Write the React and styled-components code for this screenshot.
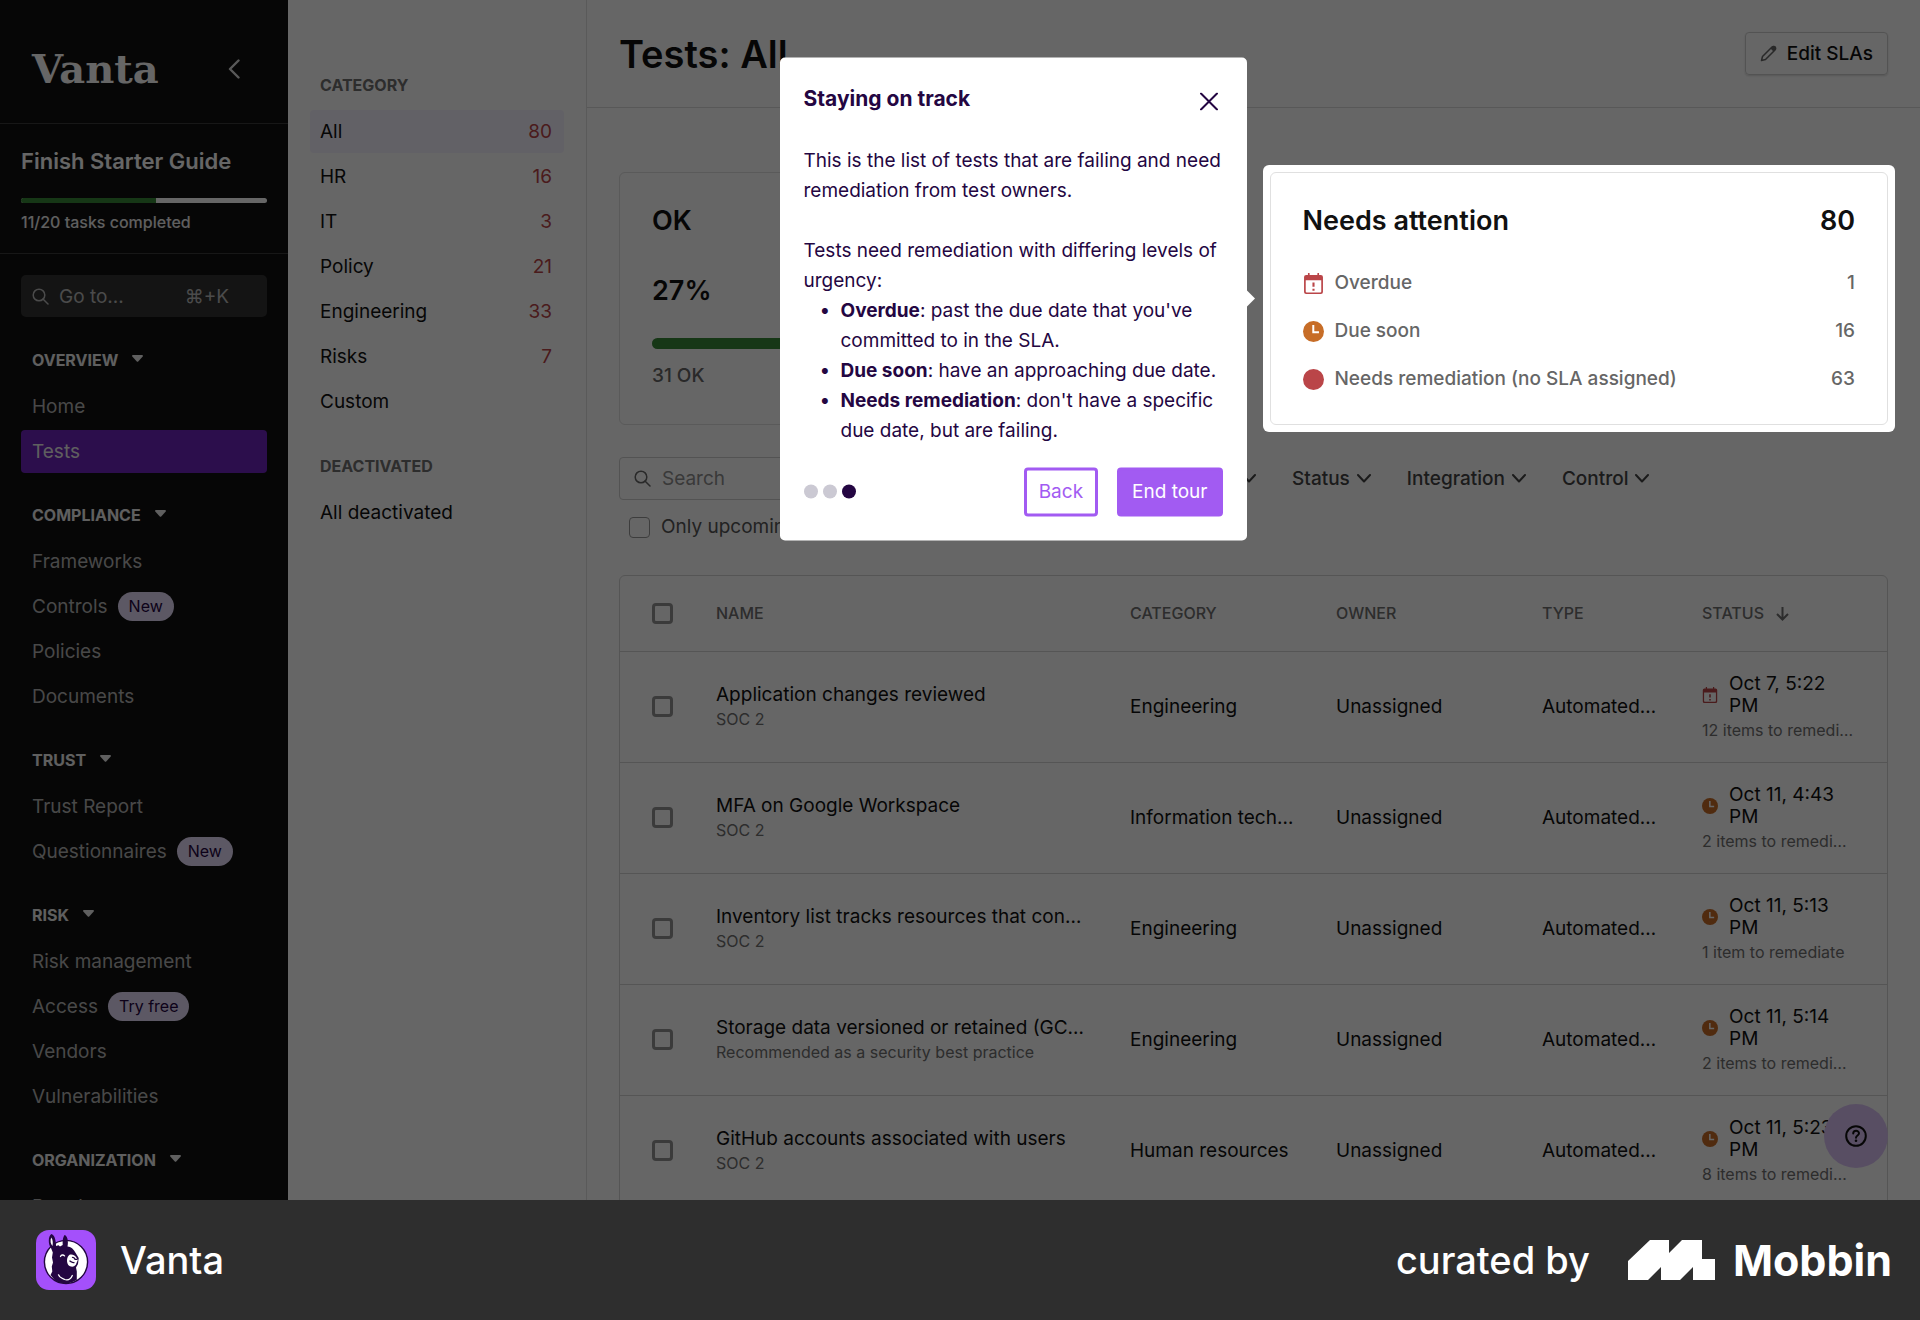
import styled, { createGlobalStyle } from "styled-components";

const navGroups = [
  { title: "Overview", items: [{ name: "Home" }, { name: "Tests", active: true }] },
  {
    title: "Compliance",
    items: [
      { name: "Frameworks" },
      { name: "Controls", tag: "New" },
      { name: "Policies" },
      { name: "Documents" },
    ],
  },
  {
    title: "Trust",
    items: [{ name: "Trust Report" }, { name: "Questionnaires", tag: "New" }],
  },
  {
    title: "Risk",
    items: [
      { name: "Risk management" },
      { name: "Access", tag: "Try free" },
      { name: "Vendors" },
      { name: "Vulnerabilities" },
    ],
  },
  { title: "Organization", items: [{ name: "People" }] },
];

const categories = [
  { name: "All", count: 80, active: true },
  { name: "HR", count: 16 },
  { name: "IT", count: 3 },
  { name: "Policy", count: 21 },
  { name: "Engineering", count: 33 },
  { name: "Risks", count: 7 },
  { name: "Custom" },
];

const attention = [
  { name: "Overdue", count: 1, icon: "overdue" },
  { name: "Due soon", count: 16, icon: "soon" },
  { name: "Needs remediation (no SLA assigned)", count: 63, icon: "none" },
];

const tests = [
  {
    name: "Application changes reviewed",
    note: "SOC 2",
    category: "Engineering",
    icon: "overdue",
    date: "Oct 7, 5:22 PM",
    left: "12 items to remedi…",
  },
  {
    name: "MFA on Google Workspace",
    note: "SOC 2",
    category: "Information tech…",
    icon: "soon",
    date: "Oct 11, 4:43 PM",
    left: "2 items to remedi…",
  },
  {
    name: "Inventory list tracks resources that con…",
    note: "SOC 2",
    category: "Engineering",
    icon: "soon",
    date: "Oct 11, 5:13 PM",
    left: "1 item to remediate",
  },
  {
    name: "Storage data versioned or retained (GC…",
    note: "Recommended as a security best practice",
    category: "Engineering",
    icon: "soon",
    date: "Oct 11, 5:14 PM",
    left: "2 items to remedi…",
  },
  {
    name: "GitHub accounts associated with users",
    note: "SOC 2",
    category: "Human resources",
    icon: "soon",
    date: "Oct 11, 5:23 PM",
    left: "8 items to remedi…",
  },
];

const StatusIcon = ({ kind, size }) => (
  <svg width={size} height={size} viewBox="0 0 20 20" aria-hidden="true">
    {kind === "overdue" && (
      <>
        <path
          d="M5.5 .5v3M14.5 .5v3"
          stroke="#ba4548"
          strokeWidth="1.6"
          strokeLinecap="round"
        />
        <path
          fill="#ba4548"
          fillRule="evenodd"
          d="M3 1.8h14a2 2 0 0 1 2 2V18a2 2 0 0 1-2 2H3a2 2 0 0 1-2-2V3.8a2 2 0 0 1 2-2zM2.6 7v10.5a1 1 0 0 0 1 1h12.8a1 1 0 0 0 1-1V7z"
        />
        <path d="M10 9v4M10 15v2" stroke="#ba4548" strokeWidth="2" />
      </>
    )}
    {kind === "soon" && (
      <>
        <circle cx="10" cy="10" r="10" fill="#c76d27" />
        <path d="M9.8 3.8v6.8h5.4" stroke="#fff" strokeWidth="1.9" fill="none" />
      </>
    )}
    {kind === "none" && <circle cx="10" cy="10" r="10" fill="#ba4548" />}
  </svg>
);

const SearchIcon = () => (
  <svg width="17" height="17" viewBox="0 0 17 17" aria-hidden="true">
    <circle cx="7" cy="7" r="5.8" fill="none" stroke="currentColor" strokeWidth="1.5" />
    <path d="M11 11l5 5" stroke="currentColor" strokeWidth="1.5" strokeLinecap="round" />
  </svg>
);

const Chevron = () => (
  <svg width="14" height="9" viewBox="0 0 14 9" aria-hidden="true">
    <path
      d="M1 1l6 6.5L13 1"
      fill="none"
      stroke="currentColor"
      strokeWidth="2"
      strokeLinecap="round"
      strokeLinejoin="round"
    />
  </svg>
);

const Donkey = () => (
  <svg width="60" height="60" viewBox="0 0 60 60" aria-hidden="true">
    <rect width="60" height="60" rx="13" fill="#a450fb" />
    <circle cx="30" cy="32" r="21.6" fill="#fff" stroke="#240642" strokeWidth="1.4" />
    {/* head, ears and neck */}
    <path
      fill="#240642"
      d="M15.3 4c3 .6 4.400 5 4.800 12l2.400-.8 1.500 1.300 2.700-1.500c-.2-3.500 0-7.500 1.800-10 2.500.6 4.200 5 3 11.500 3.500.4 6 2.500 8 6.200l3.200 5.300-.7 6-2 3.500.8 4V49.800C34 54.500 26 54.500 19 50.500L14.500 45l1.800-3.500-.5-5 1.200-4-1-5 .8-5-1.800-4.500C12 14 12 6.500 15.300 4z"
    />
    {/* left ear highlight */}
    <path fill="#fff" d="M15.200 7.500c1.800 2 1.800 5.500 1.300 8.500-2-2-2.500-5.500-1.300-8.500z" />
    {/* muzzle */}
    <path fill="#fff" d="M33.500 24.800c3-.6 5 .3 6.500 2.200l1.800 3-2 4.800c-2 2.600-5.600 2.200-7.500.2-2.200-3.200-1.500-8 1.200-10.200z" />
    <path
      d="M36 27.500c1.500-.6 2.500.5 3 1.800h2.500M33.500 31c1.500 0 2.500 2.500 5 1.500"
      fill="none"
      stroke="#240642"
      strokeWidth="1.300"
    />
    {/* eye and smile */}
    <path
      d="M24.500 26.500c.8-1.800 2.800-2 4-.6M22.500 44.800c1.500 4.200 4.500 2.800 6 4.700 2.500.8 6 .3 7.800-4"
      fill="none"
      stroke="#fff"
      strokeWidth="1.300"
      strokeLinecap="round"
    />
  </svg>
);

export default function App() {
  return (
    <Page>
      <GlobalStyle />
      <Screen>
        <Sidebar>
          <Brand>
            <Logo href="#home">Vanta</Logo>
            <Collapse aria-label="Collapse sidebar">
              <svg width="12" height="20" viewBox="0 0 12 20">
                <path
                  d="M10.5 1.5L2 10l8.5 8.5"
                  fill="none"
                  stroke="currentColor"
                  strokeWidth="2.4"
                  strokeLinecap="round"
                  strokeLinejoin="round"
                />
              </svg>
            </Collapse>
          </Brand>
          <Guide>
            <h2>Finish Starter Guide</h2>
            <div className="track">
              <div className="done" />
            </div>
            <p>11/20 tasks completed</p>
          </Guide>
          <GoTo>
            <SearchIcon />
            <input type="text" placeholder="Go to..." aria-label="Go to" />
            <span>⌘+K</span>
          </GoTo>
          <Nav>
            {navGroups.map((group) => (
              <NavGroup key={group.title}>
                <button>
                  {group.title}
                  <svg width="11" height="7" viewBox="0 0 11 7">
                    <path
                      d="M1 0h9a1 1 0 0 1 .7 1.5L6.200 6.500a1 1 0 0 1-1.400 0L.3 1.500A1 1 0 0 1 1 0z"
                      fill="currentColor"
                    />
                  </svg>
                </button>
                <ul>
                  {group.items.map((item) => (
                    <li key={item.name}>
                      <NavLink href="#nav" $active={item.active}>
                        {item.name}
                        {item.tag && <Tag>{item.tag}</Tag>}
                      </NavLink>
                    </li>
                  ))}
                </ul>
              </NavGroup>
            ))}
          </Nav>
        </Sidebar>
        <CategoryPanel>
          <h3>Category</h3>
          <ul>
            {categories.map((item) => (
              <li key={item.name}>
                <CategoryLink href="#category" $active={item.active}>
                  {item.name}
                  <span>{item.count}</span>
                </CategoryLink>
              </li>
            ))}
          </ul>
          <h3>Deactivated</h3>
          <ul>
            <li>
              <CategoryLink href="#category">All deactivated</CategoryLink>
            </li>
          </ul>
        </CategoryPanel>
        <Main>
          <Header>
            <h1>Tests: All</h1>
            <EditButton>
              <svg width="17" height="17" viewBox="0 0 17 17" aria-hidden="true">
                <path
                  d="M1.5 15.5l1-4L12 2a1.9 1.9 0 0 1 3 3l-9.5 9.5z"
                  fill="none"
                  stroke="currentColor"
                  strokeWidth="1.5"
                  strokeLinejoin="round"
                />
                <path d="M10.5 3.5L12.5 1.5a2 2 0 0 1 3 3l-2 2z" fill="currentColor" />
              </svg>
              Edit SLAs
            </EditButton>
          </Header>
          <Content>
            <Cards>
              <Card>
                <h2>OK</h2>
                <strong>27%</strong>
                <div className="track">
                  <div className="done" />
                </div>
                <p>31 OK</p>
              </Card>
              <Spotlight>
                <Card>
                  <h2>
                    Needs attention <span>80</span>
                  </h2>
                  <AttentionList>
                    {attention.map((item) => (
                      <li key={item.name}>
                        <StatusIcon kind={item.icon} size={21} />
                        {item.name}
                        <span>{item.count}</span>
                      </li>
                    ))}
                  </AttentionList>
                </Card>
                <Tour />
              </Spotlight>
            </Cards>
            <Filters>
              <SearchBox>
                <SearchIcon />
                <input type="search" placeholder="Search" aria-label="Search" />
              </SearchBox>
              {["Type", "Status", "Integration", "Control"].map((name) => (
                <FilterButton key={name}>
                  {name}
                  <Chevron />
                </FilterButton>
              ))}
            </Filters>
            <Upcoming>
              <input type="checkbox" />
              Only upcoming
            </Upcoming>
            <TestTable />
          </Content>
        </Main>
        <Help aria-label="Help">
          <svg width="22" height="22" viewBox="0 0 22 22">
            <circle cx="11" cy="11" r="9.8" fill="none" stroke="currentColor" strokeWidth="2" />
            <path
              d="M8.2 8.6c0-3.8 5.8-3.6 5.8-.3 0 2.2-3 2.2-3 4.4"
              fill="none"
              stroke="currentColor"
              strokeWidth="2"
              strokeLinecap="round"
            />
            <circle cx="11" cy="15.8" r="1.3" fill="currentColor" />
          </svg>
        </Help>
        <Overlay />
      </Screen>
      <Footer>
        <Donkey />
        <FooterText>Vanta</FooterText>
        <Curated>
          <FooterText>curated by</FooterText>
          <svg width="87" height="40" viewBox="0 0 87 40" aria-hidden="true">
            <path
              fill="#fff"
              d="M0 21L22 0h19v13L54 0h20v19h13v21H65V27L52 40H33V27L20 40H0z"
            />
          </svg>
          <Mobbin>Mobbin</Mobbin>
        </Curated>
      </Footer>
    </Page>
  );
}

function Tour() {
  return (
    <TourBox role="dialog" aria-label="Staying on track">
      <header>
        <h2>Staying on track</h2>
        <button aria-label="Close">
          <svg width="18" height="18" viewBox="0 0 18 18">
            <path
              d="M1 1l16 16M17 1L1 17"
              stroke="currentColor"
              strokeWidth="2"
              strokeLinecap="round"
            />
          </svg>
        </button>
      </header>
      <p>
        This is the list of tests that are failing and need remediation from
        test owners.
      </p>
      <p>Tests need remediation with differing levels of urgency:</p>
      <ul>
        <li>
          <b>Overdue</b>: past the due date that you've committed to in the SLA.
        </li>
        <li>
          <b>Due soon</b>: have an approaching due date.
        </li>
        <li>
          <b>Needs remediation</b>: don't have a specific due date, but are
          failing.
        </li>
      </ul>
      <footer>
        <Dot />
        <Dot />
        <Dot $current />
        <TourButton>Back</TourButton>
        <TourButton $primary>End tour</TourButton>
      </footer>
    </TourBox>
  );
}

function TestTable() {
  return (
    <TableBox>
      <Table>
        <colgroup>
          <col className="check" />
          <col />
          <col className="wide" />
          <col className="wide" />
          <col className="type" />
          <col className="status" />
        </colgroup>
        <thead>
          <tr>
            <th>
              <input type="checkbox" aria-label="Select all tests" />
            </th>
            <th>Name</th>
            <th>Category</th>
            <th>Owner</th>
            <th>Type</th>
            <th>
              Status
              <svg width="13" height="15" viewBox="0 0 13 15" aria-hidden="true">
                <path
                  d="M6.5 1v12.5M1 8l5.5 5.5L12 8"
                  fill="none"
                  stroke="currentColor"
                  strokeWidth="2"
                />
              </svg>
            </th>
          </tr>
        </thead>
        <tbody>
          {tests.map((test) => (
            <tr key={test.name}>
              <td>
                <input type="checkbox" aria-label={"Select " + test.name} />
              </td>
              <td>
                {test.name}
                <small>{test.note}</small>
              </td>
              <td>{test.category}</td>
              <td>Unassigned</td>
              <td>Automated…</td>
              <td>
                <DueDate>
                  <StatusIcon kind={test.icon} size={16} />
                  <span>{test.date}</span>
                </DueDate>
                <small>{test.left}</small>
              </td>
            </tr>
          ))}
        </tbody>
      </Table>
    </TableBox>
  );
}

const GlobalStyle = createGlobalStyle`
  * {
    box-sizing: border-box;
  }
  body {
    margin: 0;
    font-family: Inter, "Liberation Sans", sans-serif;
    font-size: 19px;
    color: #111;
  }
  h1, h2, h3, p, ul {
    margin: 0;
    padding: 0;
  }
  ul {
    list-style: none;
  }
  a {
    color: inherit;
    text-decoration: none;
  }
  button, input {
    font: inherit;
    color: inherit;
    background: none;
    border: none;
    padding: 0;
    margin: 0;
  }
  button {
    cursor: pointer;
  }
  svg {
    flex-shrink: 0;
  }
  input[type="checkbox"] {
    appearance: none;
    display: block;
    width: 21px;
    height: 21px;
    border: 3px solid #949494;
    border-radius: 4px;
  }
`;

const Page = styled.div`
  display: flex;
  flex-direction: column;
  height: 100vh;
`;

const Screen = styled.div`
  position: relative;
  display: flex;
  flex: 1;
  min-height: 0;
  overflow: hidden;
  background: #fff;
`;

const Overlay = styled.div`
  position: absolute;
  inset: 0;
  z-index: 1;
  background: rgba(0, 0, 0, 0.6);
`;

const Sidebar = styled.aside`
  flex: 0 0 288px;
  min-width: 0;
  background: #111;
  color: #fff;
`;

const Brand = styled.div`
  display: flex;
  align-items: center;
  justify-content: space-between;
  height: 124px;
  padding: 14px 48px 0 32px;
  border-bottom: 1px solid #3a3a3a;
`;

const Logo = styled.a`
  font: bold 40px/50px "DejaVu Serif", serif;
`;

const Collapse = styled.button`
  display: flex;
  color: #ddd;
`;

const Guide = styled.section`
  padding: 24px 21px 0;
  height: 130px;
  border-bottom: 1px solid #3a3a3a;

  h2 {
    font-size: 22px;
    line-height: 26px;
    font-weight: 600;
  }
  .track {
    height: 5px;
    margin: 24px 0 10px;
    border-radius: 3px;
    background: #fff;
    overflow: hidden;
  }
  .done {
    width: 55%;
    height: 100%;
    background: #388a37;
  }
  p {
    font-size: 16px;
    line-height: 18px;
    font-weight: 500;
    color: #eee;
  }
`;

const GoTo = styled.div`
  display: flex;
  align-items: center;
  height: 42px;
  margin: 21px 21px 0;
  padding: 0 38px 0 11px;
  border-radius: 5px;
  background: #333;
  color: #bbb;

  input {
    flex: 1;
    width: 100%;
    min-width: 0;
    margin-left: 10px;
  }
  input::placeholder {
    color: #bbb;
    opacity: 1;
  }
`;

const Nav = styled.nav`
  display: flex;
  flex-direction: column;
  gap: 29px;
  padding: 30px 21px 0;
`;

const NavGroup = styled.div`
  button {
    display: flex;
    align-items: center;
    gap: 14px;
    height: 25px;
    margin-bottom: 13px;
    padding-left: 11px;
    font-size: 16px;
    font-weight: 700;
    text-transform: uppercase;
    color: #eee;
  }
  button svg {
    margin-bottom: 3px;
  }
  ul {
    display: grid;
    gap: 2px;
  }
`;

const NavLink = styled.a`
  display: flex;
  align-items: center;
  gap: 10px;
  height: 43px;
  padding: 0 11px;
  border-radius: 4px;
  background: ${(props) => (props.$active ? "#6f23bf" : "none")};
  color: ${(props) => (props.$active ? "#eee" : "#b5b5b5")};
`;

const Tag = styled.span`
  padding: 0 11px;
  border-radius: 15px;
  font-size: 16px;
  line-height: 29px;
  background: #e7dcfa;
  color: #240642;
`;

const CategoryPanel = styled.aside`
  flex: 0 0 299px;
  padding: 73px 22px 0;
  border-right: 1px solid #e0e0e0;

  h3 {
    padding: 0 10px;
    font-size: 16px;
    line-height: 24px;
    font-weight: 700;
    text-transform: uppercase;
    color: #707070;
  }
  ul {
    display: grid;
    gap: 2px;
    padding: 13px 0 31px;
  }
`;

const CategoryLink = styled.a`
  display: flex;
  align-items: center;
  justify-content: space-between;
  height: 43px;
  padding: 0 12px 0 10px;
  border-radius: 4px;
  background: ${(props) => (props.$active ? "#f6f2ff" : "none")};

  span {
    color: #ba4548;
  }
`;

const Main = styled.main`
  flex: 1;
  min-width: 0;
`;

const Header = styled.header`
  display: flex;
  align-items: center;
  justify-content: space-between;
  height: 108px;
  padding: 0 32px;
  border-bottom: 1px solid #dcdcdc;

  h1 {
    font-size: 38px;
    font-weight: 600;
  }
`;

const EditButton = styled.button`
  display: flex;
  align-items: center;
  gap: 10px;
  height: 43px;
  padding: 0 14px;
  border: 1px solid #d0d0d0;
  border-radius: 4px;
  box-shadow: 0 1px 2px rgba(0, 0, 0, 0.15);
  font-weight: 500;

  svg {
    color: #666;
  }
`;

const Content = styled.div`
  padding: 64px 32px 0;
`;

const Cards = styled.div`
  display: grid;
  grid-template-columns: 1fr 1fr;
  gap: 32px;
`;

const Card = styled.section`
  height: 253px;
  padding: 31px 32px 0;
  border: 1px solid #e0e0e0;
  border-radius: 6px;

  h2,
  strong {
    display: flex;
    justify-content: space-between;
    font-size: 27px;
    line-height: 34px;
    font-weight: 600;
  }
  strong {
    margin: 36px 0 30px;
  }
  .track {
    height: 11px;
    border-radius: 6px;
    background: #e0e0e0;
    overflow: hidden;
  }
  .done {
    width: 27%;
    height: 100%;
    background: #388a37;
  }
  p {
    margin-top: 15px;
    line-height: 24px;
    font-weight: 500;
    color: #666;
  }
`;

const Spotlight = styled.div`
  position: relative;
  z-index: 2;
  margin: -7px;
  padding: 7px;
  border-radius: 6px;
  background: #fff;
`;

const AttentionList = styled.ul`
  display: grid;
  gap: 24px;
  margin-top: 33px;

  li {
    display: flex;
    align-items: center;
    gap: 11px;
    line-height: 24px;
    font-weight: 500;
    color: #666;
  }
  span {
    margin-left: auto;
  }
`;

const TourBox = styled.div`
  position: absolute;
  top: 50%;
  right: calc(100% + 16px);
  width: 467px;
  padding: 24px;
  transform: translateY(-50%);
  border-radius: 5px;
  background: #fff;
  color: #240642;
  line-height: 30px;

  &::after {
    content: "";
    position: absolute;
    top: 50%;
    left: 100%;
    margin-top: -8px;
    border: 8px solid transparent;
    border-left-color: #fff;
    border-right: none;
  }
  header {
    display: flex;
    justify-content: space-between;
    margin-bottom: 24px;
  }
  h2 {
    font-size: 21px;
    line-height: 34px;
    font-weight: 700;
  }
  header button {
    display: flex;
    align-items: center;
    height: 40px;
    margin-right: 5px;
  }
  p + p {
    margin-top: 30px;
  }
  ul {
    padding-left: 37px;
    list-style: "•  ";
  }
  footer {
    display: flex;
    align-items: center;
    gap: 5px;
    margin-top: 22px;
  }
`;

const Dot = styled.span`
  width: 14px;
  height: 14px;
  border-radius: 50%;
  background: ${(props) => (props.$current ? "#240642" : "#cbc9d3")};
`;

const TourButton = styled.button`
  height: 49px;
  padding: 0 12px;
  border: 3px solid #a25bf2;
  border-radius: 4px;
  background: ${(props) => (props.$primary ? "#a25bf2" : "#fff")};
  color: ${(props) => (props.$primary ? "#fff" : "#a25bf2")};
  margin-left: ${(props) => (props.$primary ? "14px" : "auto")};
`;

const Filters = styled.div`
  display: flex;
  align-items: center;
  gap: 36px;
  margin-top: 32px;
`;

const SearchBox = styled.div`
  display: flex;
  align-items: center;
  gap: 11px;
  width: 535px;
  height: 43px;
  padding: 0 14px;
  border: 1px solid #d0d0d0;
  border-radius: 4px;
  color: #666;

  input::placeholder {
    color: #909090;
    opacity: 1;
  }
`;

const FilterButton = styled.button`
  display: flex;
  align-items: center;
  gap: 7px;
  font-weight: 500;
  color: #444;
`;

const Upcoming = styled.label`
  display: flex;
  align-items: center;
  gap: 11px;
  width: max-content;
  margin: 15px 0 0 10px;
  line-height: 24px;
  color: #555;

  input[type="checkbox"] {
    border: 1px solid #999;
  }
`;

const TableBox = styled.div`
  margin-top: 36px;
  border: 1px solid #d4d4d4;
  border-radius: 6px;
`;

const Table = styled.table`
  width: 100%;
  table-layout: fixed;
  border-collapse: collapse;
  white-space: nowrap;

  .check {
    width: 96px;
  }
  .wide {
    width: 206px;
  }
  .type {
    width: 160px;
  }
  .status {
    width: 185px;
  }
  th,
  td {
    padding: 0;
    text-align: left;
  }
  th:first-child,
  td:first-child {
    padding-left: 32px;
  }
  th {
    height: 75px;
    font-size: 16px;
    font-weight: 500;
    text-transform: uppercase;
    color: #707070;
  }
  th svg {
    margin-left: 12px;
    vertical-align: -2px;
  }
  td {
    height: 111px;
    border-top: 1px solid #d4d4d4;
  }
  small {
    display: block;
    margin-top: 2px;
    font-size: 16px;
    line-height: 22px;
    color: #707070;
  }
`;

const DueDate = styled.div`
  display: flex;
  align-items: center;
  gap: 11px;
  width: 152px;
  line-height: 22px;
  white-space: normal;
`;

const Help = styled.button`
  position: absolute;
  right: 32px;
  bottom: 32px;
  display: grid;
  place-items: center;
  width: 64px;
  height: 64px;
  border-radius: 50%;
  background: #dcc4f7;
`;

const Footer = styled.footer`
  display: flex;
  align-items: center;
  gap: 24px;
  flex: 0 0 120px;
  padding: 0 28px 0 36px;
  background: #2e2e2e;
  color: #fff;
`;

const FooterText = styled.span`
  font-size: 38px;
  font-weight: 500;
`;

const Curated = styled.div`
  display: flex;
  align-items: center;
  margin-left: auto;

  svg {
    margin: 0 18px 0 38px;
  }
`;

const Mobbin = styled.span`
  font-size: 43px;
  font-weight: 700;
`;
